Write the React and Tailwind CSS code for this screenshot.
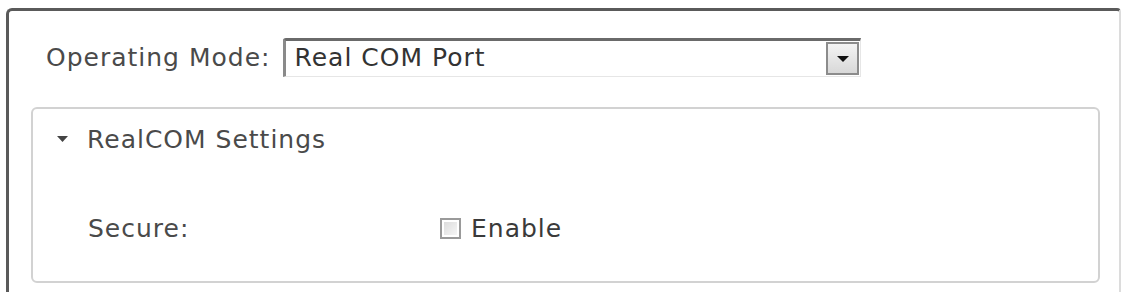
export default function App() {
  return (
    <div className="w-[1123px] h-[292px] overflow-hidden bg-white pt-[8px] pl-[6px] pr-[2px]" style={{ fontFamily: '"DejaVu Sans", "Noto Sans", sans-serif' }}>
      <div className="h-[320px] border-l-[3px] border-t-[3px] border-r-[2px] border-l-[#5a5a5a] border-t-[#5a5a5a] border-r-[#dcdcdc] rounded-tl-[6px] rounded-tr-[4px] text-[#4a4a4a]">
        <div className="flex items-center pl-[37px] pt-[27px]">
          <span className="text-[25px] leading-none tracking-[1px]">Operating Mode:</span>
          <div className="ml-[13px] flex h-[39px] w-[578px] items-stretch border-t-[3px] border-l-[3px] border-b border-r border-t-[#6a6a6a] border-l-[#8a8a8a] border-b-[#e6e6e6] border-r-[#e6e6e6] rounded-tl-[3px]">
            <span className="flex-1 pl-[8px] text-[25px] leading-[34px] tracking-[1px] text-[#333]">Real COM Port</span>
            <div className="my-[1px] mr-[1px] flex w-[33px] items-center justify-center border-2 border-[#8c8c8c] bg-gradient-to-b from-[#f4f4f4] to-[#d8d8d8]">
              <svg width="14" height="8" viewBox="0 0 14 8"><path d="M1 1 L13 1 L7 7 Z" fill="#111" /></svg>
            </div>
          </div>
        </div>
        <div className="ml-[22px] mr-[19px] mt-[30px] h-[176px] rounded-[6px] border-2 border-[#d2d2d2]">
          <div className="flex items-center pl-[24px] pt-[18px]">
            <svg width="11" height="7" viewBox="0 0 11 7"><path d="M0 0 L11 0 L5.5 6 Z" fill="#444" /></svg>
            <span className="ml-[19px] text-[25px] leading-none tracking-[1px]">RealCOM Settings</span>
          </div>
          <div className="flex items-center pl-[55px] pt-[64px]">
            <span className="w-[352px] text-[25px] leading-none tracking-[1px]">Secure:</span>
            <span className="flex h-[21px] w-[21px] items-center justify-center border-2 border-[#9a9a9a] bg-white">
              <span className="h-[13px] w-[13px] bg-gradient-to-br from-[#dcdcdc] to-[#f6f6f6]" />
            </span>
            <span className="ml-[10px] text-[25px] leading-none tracking-[1px] text-[#3a3a3a]">Enable</span>
          </div>
        </div>
      </div>
    </div>
  );
}
